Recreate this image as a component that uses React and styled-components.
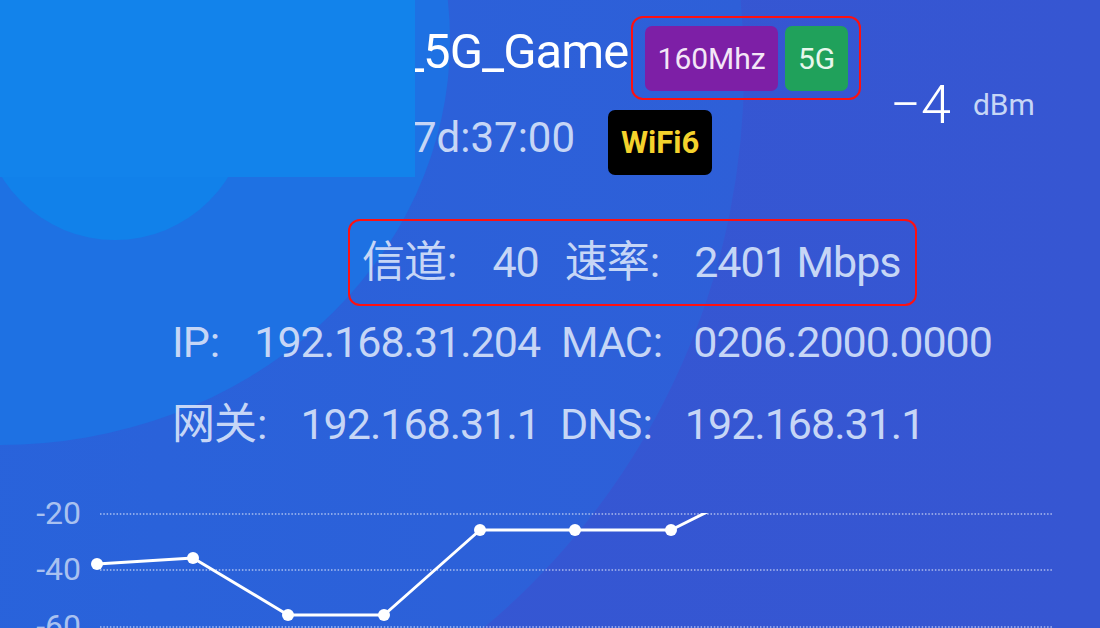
import React from "react";
import styled, { createGlobalStyle } from "styled-components";

const GlobalStyle = createGlobalStyle`
  html, body { margin: 0; padding: 0; background: #3556d2; }
  body { font-family: Roboto, "Noto Sans CJK SC", sans-serif; }
`;

const FONT = `Roboto, "Noto Sans CJK SC", sans-serif`;
const SOFT = "#c6d6f6";

const Page = styled.div`
  position: relative;
  width: 1100px;
  height: 628px;
  overflow: hidden;
  background: linear-gradient(90deg, #3457d3 0%, #3656d2 100%);
  font-family: ${FONT};
`;

const BigArc = styled.div`
  position: absolute;
  left: -712px;
  top: -658px;
  width: 1456px;
  height: 1456px;
  border-radius: 50%;
  background: linear-gradient(90deg, #2466de 0%, #2a62da 60%, #2e5fd8 100%);
`;

const InnerGlow = styled.div`
  position: absolute;
  left: -450px;
  top: -365px;
  width: 900px;
  height: 810px;
  border-radius: 50%;
  background: #1e71e3;
`;

const Bubble = styled.div`
  position: absolute;
  left: -18px;
  top: -26px;
  width: 266px;
  height: 266px;
  border-radius: 50%;
  background: #1181ea;
`;

const Redaction = styled.div`
  position: absolute;
  left: 0;
  top: 0;
  width: 415px;
  height: 177px;
  background: #1283eb;
  z-index: 2;
`;

const Content = styled.div`
  position: relative;
  z-index: 1;
  display: flex;
  flex-direction: column;
  align-items: flex-start;
  padding-top: 16px;
`;

const Header = styled.div`
  display: flex;
  align-items: flex-start;
  padding-left: 402px;
  height: 159px;
`;

const LeftCol = styled.div`
  display: flex;
  flex-direction: column;
  gap: 10px;
`;

const TitleRow = styled.div`
  display: flex;
  align-items: flex-start;
  gap: 3px;
`;

const Ssid = styled.span`
  margin-top: 11px;
  font-size: 49px;
  line-height: 1;
  letter-spacing: -1px;
  color: #ffffff;
  white-space: nowrap;
`;

const RedFrame = styled.div`
  display: flex;
  align-items: center;
  gap: ${(p) => p.$gap || 0}px;
  border: 2px solid #ff1010;
  border-radius: 12px;
`;

const TagGroup = styled(RedFrame)`
  padding: 8px 11px 7px 12px;
`;

const Tag = styled.span`
  display: flex;
  align-items: center;
  justify-content: center;
  width: ${(p) => p.$w}px;
  height: 65px;
  border-radius: 7px;
  background: ${(p) => p.$bg};
  color: ${(p) => p.$fg};
  font-size: 30px;
  line-height: 1;
`;

const TimeRow = styled.div`
  display: flex;
  align-items: flex-start;
  gap: 33px;
  padding-left: 11px;
`;

const Uptime = styled.span`
  margin-top: 7px;
  font-size: 42px;
  line-height: 1;
  color: ${SOFT};
  white-space: nowrap;
`;

const WifiBadge = styled.span`
  display: flex;
  align-items: center;
  justify-content: center;
  width: 104px;
  height: 65px;
  border-radius: 7px;
  background: #000000;
  color: #f4d22c;
  font-size: 31px;
  font-weight: 700;
  line-height: 1;
`;

const Rssi = styled.div`
  display: flex;
  align-items: flex-start;
  gap: 22px;
  margin-left: 29px;
  margin-top: 62px;
`;

const RssiValue = styled.span`
  font-size: 54px;
  font-weight: 300;
  line-height: 1;
  color: #ffffff;
`;

const RssiUnit = styled.span`
  margin-top: 12px;
  font-size: 30px;
  line-height: 1;
  color: ${SOFT};
`;

const InfoRow = styled.div`
  display: flex;
  gap: ${(p) => p.$gap || 24}px;
  margin-left: ${(p) => p.$indent}px;
  margin-top: ${(p) => p.$top}px;
  font-size: 43px;
  line-height: 44px;
  letter-spacing: -1px;
  color: ${SOFT};
  white-space: nowrap;
`;

const ChannelFrame = styled(RedFrame)`
  margin-left: 348px;
  margin-top: 44px;
  padding: 19px 14px 20px 12px;
`;

const Item = styled.span`
  display: block;
`;

const Colon = styled.span`
  margin-left: 1px;
  margin-right: ${(p) => p.$after || 36}px;
`;

const ChartWrap = styled.div`
  margin-top: 45px;
  width: 1100px;
  height: 138px;
`;

const AxisLabel = styled.text`
  font-family: ${FONT};
  font-size: 32px;
  font-weight: 400;
  fill: #a9c1f0;
`;

const grid = [
  { y: 23, label: "-20", ly: 33 },
  { y: 79, label: "-40", ly: 89 },
  { y: 136, label: "-60", ly: 146 },
];

const points = [
  [97, 73],
  [193, 67],
  [288, 124],
  [384, 124],
  [480, 39],
  [575, 39],
  [671, 39],
];

function Chart() {
  const line = [...points, [767, -9]].map((p) => p.join(",")).join(" ");
  return (
    <ChartWrap>
      <svg width="1100" height="138" viewBox="0 0 1100 138">
        <defs>
          <clipPath id="plotClip">
            <rect x="0" y="22" width="1100" height="120" />
          </clipPath>
        </defs>
        {grid.map((g) => (
          <g key={g.label}>
            <line
              x1="100"
              x2="1053"
              y1={g.y}
              y2={g.y}
              stroke="rgba(255,255,255,0.6)"
              strokeWidth="1.5"
              strokeDasharray="1.5 1.8"
            />
            <AxisLabel x="81" y={g.ly} textAnchor="end">
              {g.label}
            </AxisLabel>
          </g>
        ))}
        <polyline
          points={line}
          fill="none"
          stroke="#ffffff"
          strokeWidth="3"
          strokeLinejoin="round"
          clipPath="url(#plotClip)"
        />
        {points.map(([x, y]) => (
          <circle key={x} cx={x} cy={y} r="6" fill="#ffffff" />
        ))}
      </svg>
    </ChartWrap>
  );
}

function Field({ label, value, after }) {
  return (
    <Item>
      {label}
      <Colon $after={after}>:</Colon>
      {value}
    </Item>
  );
}

export default function App() {
  return (
    <>
      <GlobalStyle />
      <Page>
        <BigArc />
        <InnerGlow />
        <Bubble />
        <Redaction />
        <Content>
          <Header>
            <LeftCol>
              <TitleRow>
                <Ssid>_5G_Game</Ssid>
                <TagGroup $gap={7}>
                  <Tag $w={133} $bg="#7d1fa6" $fg="#f3e6f7">160Mhz</Tag>
                  <Tag $w={63} $bg="#20a15b" $fg="#e8f7ec">5G</Tag>
                </TagGroup>
              </TitleRow>
              <TimeRow>
                <Uptime>7d:37:00</Uptime>
                <WifiBadge>WiFi6</WifiBadge>
              </TimeRow>
            </LeftCol>
            <Rssi>
              <RssiValue>−4</RssiValue>
              <RssiUnit>dBm</RssiUnit>
            </Rssi>
          </Header>

          <ChannelFrame>
            <InfoRow $indent={0} $top={0} $gap={26}>
              <Field label="信道" value="40" after={36} />
              <Field label="速率" value="2401 Mbps" after={35} />
            </InfoRow>
          </ChannelFrame>

          <InfoRow $indent={172} $top={14} $gap={21}>
            <Field label="IP" value="192.168.31.204" after={35} />
            <Field label="MAC" value="0206.2000.0000" after={31} />
          </InfoRow>
          <InfoRow $indent={172} $top={38} $gap={20}>
            <Field label="网关" value="192.168.31.1" after={34} />
            <Field label="DNS" value="192.168.31.1" after={33} />
          </InfoRow>

          <Chart />
        </Content>
      </Page>
    </>
  );
}
